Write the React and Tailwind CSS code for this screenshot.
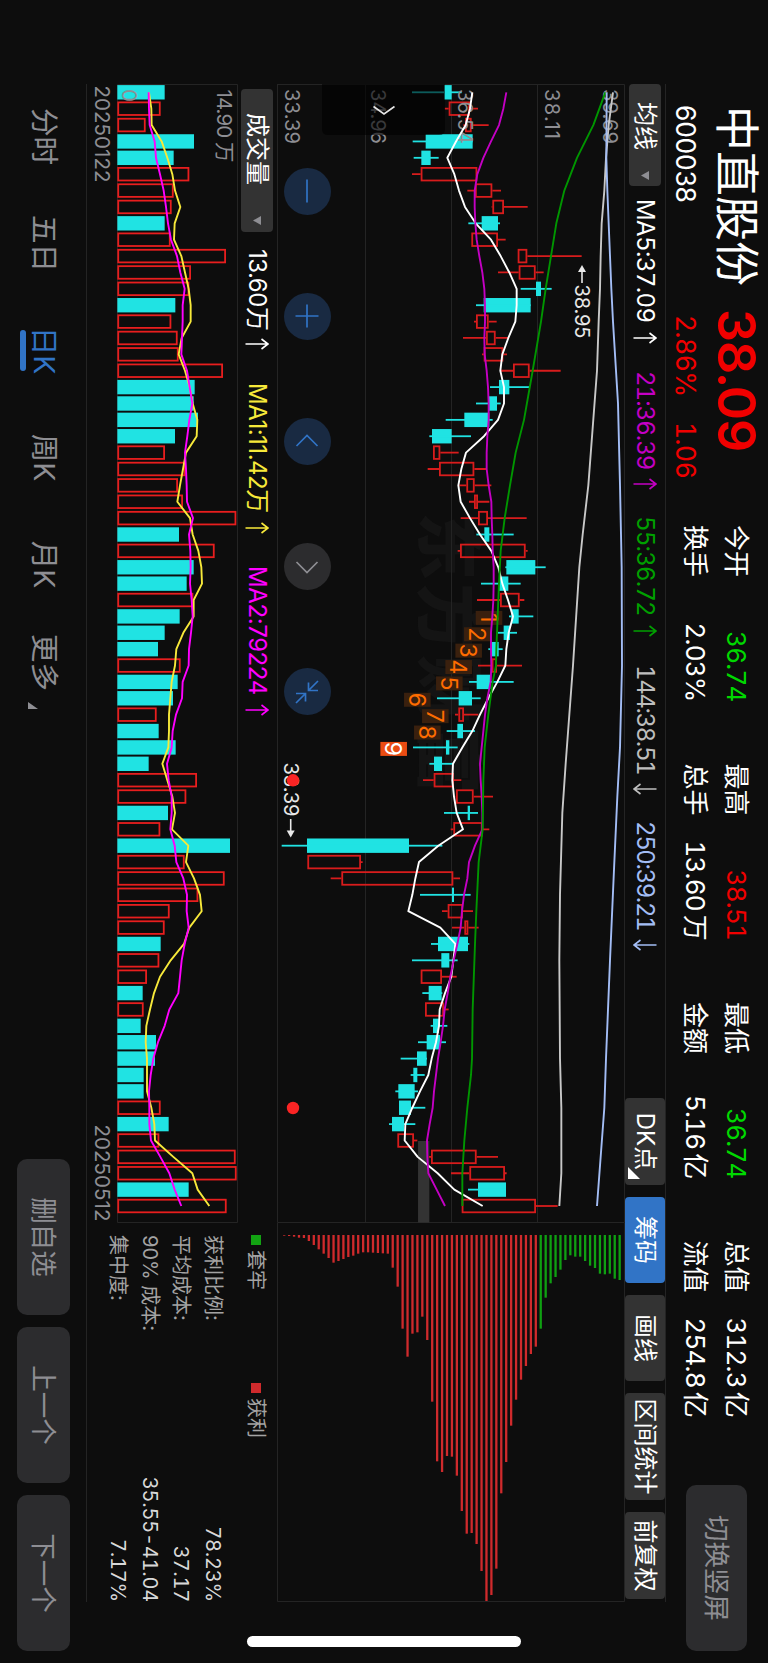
import React from 'react';
import clsx from 'clsx';

const STEP = 16.378;
const FIRST_X = 8.3;

// [up/down, low, body low, body high, high]
const candles = [
  ['d', 426, 522, 545, 575], ['u', 524, 536, 600, 624], ['u', 580, 585, 605, 656], ['d', 428, 467, 608, 608],
  ['d', 431, 454, 482, 506], ['u', 426, 452, 622, 622], ['u', 592, 615, 667, 693], ['u', 665, 667, 702, 773],
  ['d', 595, 635, 684, 690], ['u', 604, 604, 684, 707], ['u', 743, 743, 772, 935], ['u', 684, 746, 797, 821],
  ['d', 752, 798, 813, 845], ['d', 618, 641, 782, 782], ['u', 612, 618, 656, 680], ['u', 579, 648, 677, 717],
  ['u', 636, 641, 700, 711], ['u', 690, 729, 779, 872], ['d', 660, 687, 718, 777], ['d', 618, 656, 681, 692],
  ['d', 527, 583, 658, 668], ['d', 478, 486, 545, 603], ['u', 489, 489, 511, 566], ['u', 473, 507, 613, 650],
  ['u', 568, 589, 614, 664], ['u', 597, 612, 624, 658], ['u', 572, 624, 654, 770], ['d', 619, 643, 658, 731],
  ['u', 563, 570, 767, 773], ['d', 706, 709, 796, 827], ['d', 633, 687, 715, 752], ['u', 621, 690, 749, 763],
  ['d', 717, 724, 746, 790], ['d', 684, 701, 720, 741], ['d', 655, 665, 686, 698], ['u', 624, 665, 681, 756],
  ['d', 597, 620, 661, 731], ['d', 501, 566, 606, 632], ['u', 555, 565, 582, 625], ['d', 530, 562, 579, 615],
  ['d', 429, 528, 538, 563], ['d', 478, 492, 516, 550], ['u', 459, 491, 552, 574], ['u', 557, 558, 611, 669],
  ['d', 522, 593, 600, 624], ['u', 542, 550, 638, 658], ['d', 35, 111, 417, 517], ['u', 112, 112, 273, 278],
  ['u', 182, 214, 550, 570], ['d', 450, 546, 552, 602], ['u', 516, 533, 579, 609], ['u', 546, 583, 595, 626],
  ['d', 483, 504, 594, 598], ['d', 426, 514, 538, 563], ['u', 452, 452, 516, 560], ['d', 457, 476, 515, 517],
  ['u', 465, 465, 522, 536], ['d', 482, 489, 507, 532], ['d', 444, 470, 510, 528], ['d', 392, 441, 470, 471],
  ['d', 422, 430, 442, 464], ['d', 376, 385, 434, 444], ['d', 387, 387, 423, 466], ['d', 357, 366, 402, 436],
  ['u', 382, 382, 432, 442], ['u', 477, 483, 620, 684], ['u', 543, 598, 705, 710], ['d', 594, 624, 708, 708],
  ['u', 575, 575, 798, 863]
];

const volumes = [
  ['d', 254], ['u', 242], ['u', 197], ['d', 342], ['d', 281], ['u', 328], ['u', 281], ['u', 275], ['d', 254], ['u', 272],
  ['u', 438], ['u', 333], ['u', 328], ['d', 286], ['u', 274], ['u', 293], ['u', 296], ['u', 429], ['d', 344], ['d', 341],
  ['d', 354], ['d', 285], ['u', 255], ['u', 316], ['u', 294], ['u', 309], ['u', 469], ['d', 297], ['u', 404], ['d', 341],
  ['d', 320], ['u', 340], ['d', 299], ['d', 254], ['d', 234], ['u', 302], ['d', 293], ['d', 279], ['u', 230], ['d', 236],
  ['d', 287], ['d', 206], ['u', 351], ['u', 319], ['d', 264], ['u', 241], ['d', 450], ['u', 314], ['u', 434], ['u', 355],
  ['u', 269], ['u', 254], ['d', 242], ['u', 238], ['u', 201], ['d', 188], ['u', 191], ['d', 182], ['d', 228], ['d', 225],
  ['d', 191], ['d', 191], ['u', 242], ['d', 266], ['u', 238], ['u', 467], ['u', 470], ['d', 326], ['u', 440]
];

const ma5 = [
  607, 600, 587, 558, 532, 553, 567, 585, 617, 663, 692, 718, 740, 740, 736, 715, 697, 691, 702, 702, 684, 642, 588,
  574, 565, 572, 600, 630, 664, 685, 697, 714, 729, 716, 709, 706, 682, 655, 630, 607, 577, 549, 547, 552, 560, 579,
  505, 447, 436, 427, 415, 511, 556, 550, 544, 525, 509, 507, 498, 485, 475, 450, 427, 406, 404, 443, 503, 553, 638
];
const ma21 = [
  709, 700, 687, 663, 640, 622, 614, 614, 616, 620, 628, 637, 643, 645, 645, 643, 644, 650, 654, 656, 656, 652, 650,
  650, 656, 664, 665, 667, 668, 671, 671, 670, 667, 663, 663, 664, 662, 652, 645, 640, 635, 630, 632, 635, 637, 637,
  615, 597, 592, 582, 576, 572, 562, 551, 541, 533, 524, 519, 512, 504, 498, 492, 488, 479, 471, 472, 475, 500, 525
];
const ma55 = [
  [0, 1006], [2, 970], [4, 921], [6, 883], [8, 859], [10, 843], [12, 827], [14, 813], [17, 788], [20, 762], [22, 737],
  [24, 720], [26, 704], [28, 692], [30, 687], [32, 683], [34, 679], [35, 678], [36, 668], [38, 655], [40, 644],
  [42, 640], [45, 638], [47, 626], [50, 619], [52, 615], [56, 608], [59, 606], [60, 603], [62, 592], [64, 583],
  [66, 577], [68, 577]
];
const ma144 = [
  [0, 1029], [2, 1016], [4, 1008], [6, 1003], [8, 995], [10, 992], [12, 990], [14, 986], [17, 981], [24, 955],
  [27, 938], [29, 928], [35, 909], [41, 887], [44, 877], [49, 870], [53, 868], [59, 870], [62, 874], [66, 874], [68, 868]
];
const ma250 = [
  [0, 1010], [4, 1009], [6, 1012], [10, 1020], [12, 1024], [14, 1029], [17, 1038], [19, 1044], [24, 1050], [27, 1053],
  [29, 1055], [35, 1056], [40, 1050], [43, 1042], [47, 1033], [53, 1020], [59, 1008], [62, 1003], [68, 981]
];
const volMa1 = [
  207, 214, 215, 245, 262, 277, 285, 301, 284, 282, 304, 315, 326, 332, 332, 305, 296, 315, 329, 338, 352, 350, 318,
  309, 300, 292, 330, 338, 355, 364, 366, 341, 341, 310, 289, 285, 275, 271, 267, 267, 265, 247, 262, 277, 285, 276,
  325, 318, 342, 360, 365, 328, 312, 272, 240, 222, 210, 199, 197, 201, 201, 201, 214, 223, 225, 280, 337, 353, 388
];
const volMa2 = [
  206, 207, 209, 224, 228, 240, 251, 258, 264, 273, 291, 301, 314, 308, 308, 306, 304, 321, 329, 337, 328, 322, 315,
  318, 320, 321, 339, 327, 331, 332, 330, 335, 338, 333, 327, 326, 308, 306, 288, 278, 275, 261, 266, 275, 275, 271,
  284, 289, 310, 321, 320, 326, 314, 305, 300, 295, 268, 254, 234, 220, 212, 207, 208, 208, 213, 241, 268, 284, 304
];

// chip distribution, lowest price first
const chips = [
  2, 3, 5, 8, 9, 18, 30, 43, 56, 69, 83, 78, 72, 66, 62, 56, 52, 52, 53, 54, 55, 56, 98, 155, 281, 365, 296, 292, 245,
  315, 500, 679, 711, 663, 665, 722, 828, 896, 894, 927, 1008, 1098, 1080, 1001, 775, 681, 572, 494, 434, 393, 357,
  335, 281, 188, 145, 126, 104, 75, 61, 65, 65, 78, 92, 99, 116, 118, 116, 131, 135
];
const CHIP_SPLIT = 52;

const sequence = [657, 622, 596, 566, 538, 442, 496, 472, 371];

const xAt = (i) => FIRST_X + i * STEP;
const priceY = (v) => 355 - v / 3;
const volY = (v) => 158 - v / 3;
const toPoints = (data, yFn) =>
  data.map((d, i) => (Array.isArray(d) ? `${xAt(d[0])},${yFn(d[1])}` : `${xAt(i)},${yFn(d)}`)).join(' ');

const quotes = [
  [['今开', '36.74', '', 'text-[#00d800]'], ['换手', '2.03%', '', 'text-white']],
  [['最高', '38.51', '', 'text-[#f00000]'], ['总手', '13.60', '万', 'text-white']],
  [['最低', '36.74', '', 'text-[#00d800]'], ['金额', '5.16', '亿', 'text-white']],
  [['总值', '312.3', '亿', 'text-white'], ['流值', '254.8', '亿', 'text-white']]
];

const averages = [
  { text: 'MA5:37.09', up: true, style: 'w-[172px] tracking-[-0.6px] text-white' },
  { text: '21:36.39', up: true, style: 'w-[145px] tracking-[-1px] text-[#c400c4]' },
  { text: '55:36.72', up: true, style: 'w-[149px] tracking-[-0.8px] text-[#00a000]' },
  { text: '144:38.51', up: false, style: 'w-[156px] tracking-[-1.4px] text-[#bdbdbd]' },
  { text: '250:39.21', up: false, style: 'w-[276px] tracking-[-1.4px] text-[#a3bdf5]' }
];

const tools = [
  { text: 'DK点', style: 'w-[87px] bg-[#333333]', corner: true },
  { text: '筹码', style: 'w-[86px] bg-[#3174c6]' },
  { text: '画线', style: 'w-[86px] bg-[#333333]' },
  { text: '区间统计', style: 'w-[107px] bg-[#333333]' },
  { text: '前复权', style: 'w-[87px] bg-[#333333]' }
];

const costs = [
  ['获利比例:', '78.23%'],
  ['平均成本:', '37.17'],
  ['90% 成本:', '35.55-41.04'],
  ['集中度:', '7.17%']
];

const periods = ['分时', '五日', '日K', '周K', '月K', '更多'];

const Arrow = ({ up }) => (
  <svg width="12" height="24" viewBox="0 0 12 24" className={clsx('shrink-0', !up && 'rotate-180')} fill="none" stroke="currentColor" strokeWidth="1.6">
    <path d="M6 23.5V1M1 7.5L6 1l5 6.5" />
  </svg>
);

const Caret = () => (
  <svg width="9" height="8" viewBox="0 0 9 8" className="shrink-0">
    <path d="M0 0h9L4.5 8z" fill="#8e8e93" />
  </svg>
);

const Line = ({ data, y, color }) => (
  <polyline points={toPoints(data, y)} fill="none" stroke={color} strokeWidth="1.9" strokeLinejoin="round" />
);

const Candle = ({ data, index }) => {
  const [dir, low, open, close, high] = data;
  const x = xAt(index);
  const top = priceY(close);
  const height = (close - open) / 3;
  if (dir === 'd') {
    return (
      <g fill="#20e3e3">
        <rect x={x - 7.2} y={top} width="14.4" height={height} />
        <rect x={x - 0.9} y={priceY(high)} width="1.8" height={(high - low) / 3} />
      </g>
    );
  }
  return (
    <g fill="none" stroke="#d81c1c" strokeWidth="1.8">
      <rect x={x - 6.3} y={top + 0.9} width="12.6" height={Math.max(height - 1.8, 1)} />
      <path d={`M${x} ${priceY(high)}V${top}M${x} ${priceY(open)}V${priceY(low)}`} />
    </g>
  );
};

const PriceChart = () => (
  <svg width="1139" height="348" viewBox="0 0 1139 348" className="block shrink-0 font-['Inter']">
    <text x="428" y="201" fontSize="68" fontWeight="900" fill="#141414" textLength="282" className="font-['Noto_Sans_CJK_SC',sans-serif]">东方财富</text>
    <path d="M.5 348V.5H1138.5V347.5H.5M.5 87.5H1138M.5 173.5H1138M.5 259.5H1138" fill="none" stroke="#242424" />
    <rect x="1057" y={priceY(478)} width="81.5" height="11.3" fill="#333333" />
    {candles.map((c, i) => (
      <Candle key={i} data={c} index={i} />
    ))}
    <g fontSize="20" fill="#8e8e93">
      <text x="5" y={priceY(1020) + 7.2} textLength="55">39.69</text>
      <text x="5" y={priceY(846) + 7.2} textLength="50">38.11</text>
      <text x="5" y={priceY(586) + 7.2} textLength="55">36.54</text>
      <text x="5" y={priceY(326) + 7.2} textLength="55">34.96</text>
      <text x="5" y={priceY(67) + 7.2} textLength="55">33.39</text>
    </g>
    <path d="M0 180h45q6 0 6 6v111q0 6-6 6H0z" fill="#000" opacity="0.6" />
    <path d="M22.5 230.5l7.5 10.5l-7.5 10.5" fill="none" stroke="#e5e5e5" strokeWidth="1.6" />
    {sequence.map((v, i) => (
      <g key={v}>
        <rect x={xAt(32 + i) - 5.5} y={priceY(v) - 13.3} width="14" height="26.6" fill={i === 8 ? '#ea4c12' : '#3a200e'} />
        <text x={xAt(32 + i) + 1.5} y={priceY(v) + 8.2} fontSize="23" textAnchor="middle" fill={i === 8 ? '#fff' : '#ff6c00'}>
          {i + 1}
        </text>
      </g>
    ))}
    <Line data={ma5} y={priceY} color="#ffffff" />
    <Line data={ma21} y={priceY} color="#c400c4" />
    <Line data={ma55} y={priceY} color="#009600" />
    <Line data={ma144} y={priceY} color="#c8c8c8" />
    <Line data={ma250} y={priceY} color="#a3bdf5" />
    <g fontSize="20" fill="#e8e8e8">
      <path d="M187 43H199" stroke="#e8e8e8" strokeWidth="1.6" />
      <path d="M181 43l7-4v8z" />
      <text x="200.5" y="50.2" textLength="54">38.95</text>
      <text x="678.5" y="341.5" textLength="54">33.39</text>
      <path d="M735 334.3H748" stroke="#e8e8e8" strokeWidth="1.6" />
      <path d="M753.5 334.3l-7-4v8z" />
    </g>
    <circle cx="696.3" cy="332" r="6.2" fill="#fa2424" />
    <circle cx="1024" cy="332" r="6.2" fill="#fa2424" />
  </svg>
);

const ChipChart = () => (
  <svg width="379" height="348" viewBox="0 0 379 348" className="block shrink-0">
    <path d="M0 .5H378.5V347.5H0" fill="none" stroke="#242424" />
    {chips.map((len, i) => (
      <rect
        key={i}
        x="12"
        y={priceY(42.3 + i * 14.8) - 1.25}
        width={len / 3}
        height="2.3"
        fill={i < CHIP_SPLIT ? '#cf2a2c' : '#0fa012'}
      />
    ))}
  </svg>
);

const VolumeChart = () => (
  <svg width="1139" height="152" viewBox="0 0 1139 152" className="block shrink-0 font-['Inter','Noto_Sans_CJK_SC',sans-serif]">
    <path d="M.5 .5H1138.5V120.5H.5zM0 151.5H1139" fill="none" stroke="#242424" />
    {volumes.map(([dir, v], i) =>
      dir === 'd' ? (
        <rect key={i} x={xAt(i) - 7.2} y={volY(v)} width="14.4" height={(v - 112) / 3} fill="#20e3e3" />
      ) : (
        <rect key={i} x={xAt(i) - 6.3} y={volY(v) + 0.9} width="12.6" height={(v - 112) / 3 - 1.8} fill="none" stroke="#e81e1e" strokeWidth="1.8" />
      )
    )}
    <g fontSize="20.5" fill="#8e8e93">
      <text x="5.5" y={volY(433) + 7.4} textLength="73">14.90 万</text>
      <text x="5" y={volY(148) + 7.4}>0</text>
      <text x="1.5" y={volY(68) + 7.4} textLength="97">20250122</text>
      <text x="1040.5" y={volY(68) + 7.4} textLength="97">20250512</text>
    </g>
    <Line data={volMa1} y={volY} color="#f7e93a" />
    <Line data={volMa2} y={volY} color="#ff00ff" />
  </svg>
);

const RoundButton = ({ muted, children }) => (
  <button
    className={clsx(
      'size-[47px] rounded-full flex items-center justify-center',
      muted ? 'bg-[#2c2c2e] text-[#8e8e93]' : 'bg-[#192a42] text-[#3174c6]'
    )}
  >
    <svg width="28" height="28" viewBox="-14 -14 28 28" fill="none" stroke="currentColor" strokeWidth="1.7">
      {children}
    </svg>
  </button>
);

const Header = () => (
  <div className="h-[102px] flex pl-[106px] text-white">
    <div className="w-[203px] shrink-0">
      <div className="h-[63px] flex items-center text-[45px] leading-none whitespace-nowrap">中直股份</div>
      <div className="h-[39px] -ml-px flex items-center text-[26.5px] leading-none tracking-[-0.3px]">600038</div>
    </div>
    <div className="w-[216px] shrink-0 text-[#f00000]">
      <div className="h-[63px] flex items-center text-[52px] leading-none font-semibold tracking-[-1.2px]">38.09</div>
      <div className="h-[39px] flex items-center pl-[6px] text-[26.5px] leading-none tracking-[-0.6px] tabular-nums">
        <span className="w-[107px]">2.86%</span>
        <span>1.06</span>
      </div>
    </div>
    <div className="flex gap-[62px] pt-[11px]">
      {quotes.map((column, i) => (
        <div key={i} className="w-[176.5px] text-[26px] leading-none">
          {column.map(([label, value, unit, color]) => (
            <div key={label} className="h-[41px] flex items-center justify-between whitespace-nowrap">
              <span>{label}</span>
              <span className={clsx('flex gap-[4px] tracking-[-0.8px] tabular-nums', color)}>
                {value}
                {unit && <span>{unit}</span>}
              </span>
            </div>
          ))}
        </div>
      ))}
    </div>
    <button className="ml-[68px] mt-[21px] w-[166px] h-[61px] shrink-0 rounded-[10px] bg-[#2c2c2e] text-[26.5px] text-[#8e8e93]">
      切换竖屏
    </button>
  </div>
);

const App = () => {
  return (
    <div className="w-[768px] h-[1663px] overflow-hidden bg-[#0d0d0d]">
      {/* Landscape screen, turned clockwise */}
      <div className="relative w-[1663px] h-[768px] origin-top-left translate-x-[768px] rotate-90 bg-[#0d0d0d] font-['Inter','Noto_Sans_CJK_SC',sans-serif]">
        <Header />

        {/* Moving averages */}
        <div className="ml-[84px] w-[1518px] h-[41px] flex items-center border-t border-[#242424] text-[24px] leading-none whitespace-nowrap">
          <button className="w-[102px] h-[32px] shrink-0 rounded-[4px] bg-[#333333] flex items-center pl-[18px] gap-[21px] text-white">
            均线
            <Caret />
          </button>
          <div className="flex pl-[13px]">
            {averages.map((item) => (
              <div key={item.text} className={clsx('flex items-center gap-[9px] tabular-nums', item.style)}>
                {item.text}
                <Arrow up={item.up} />
              </div>
            ))}
          </div>
          <div className="flex gap-[12px] ml-auto mr-[3px]">
            {tools.map((tool) => (
              <button
                key={tool.text}
                className={clsx('relative h-[40px] rounded-[4px] text-white flex items-center justify-center', tool.style)}
              >
                {tool.text}
                {tool.corner && (
                  <svg width="12" height="12" viewBox="0 0 12 12" className="absolute right-[6px] bottom-[3px]">
                    <path d="M12 0v12H0z" fill="#fff" />
                  </svg>
                )}
              </button>
            ))}
          </div>
        </div>

        {/* Candles and chip distribution */}
        <div className="relative ml-[84px] h-[348px] flex">
          <PriceChart />
          <ChipChart />
          <div className="absolute left-[83.5px] top-[294px] flex gap-[78.2px]">
            <RoundButton><path d="M-11.5 0h23" /></RoundButton>
            <RoundButton><path d="M-11.5 0h23M0-11.5v23" /></RoundButton>
            <RoundButton><path d="M5-10.5L-5.500 0L5 10.5" /></RoundButton>
            <RoundButton muted><path d="M-5-10.5L5.5 0L-5 10.5" /></RoundButton>
            <RoundButton>
              <path d="M-11-11L-1.5-1.5M-9.5-1.5h8v-9.5M11 11L1.5 1.5M9.5 1.5h-8v9.5" />
            </RoundButton>
          </div>
        </div>

        {/* Volume header and chip legend */}
        <div className="ml-[84px] h-[39px] flex items-center text-[24px] leading-none whitespace-nowrap">
          <button className="ml-[5px] w-[143px] h-[32px] shrink-0 rounded-[4px] bg-[#333333] flex items-center pl-[24px] gap-[31px] text-white">
            成交量
            <Caret />
          </button>
          <div className="ml-[17px] w-[134px] flex items-center gap-[8px] tracking-[-0.5px] text-white">13.60万 <Arrow up /></div>
          <div className="w-[183px] flex items-center gap-[9px] tracking-[-0.5px] text-[#f7e93a]">MA1:11.42万 <Arrow up /></div>
          <div className="w-[669px] flex items-center gap-[9px] tracking-[-0.4px] text-[#ff00ff]">MA2:79224 <Arrow up /></div>
          <div className="flex items-center pt-[3px] text-[20px] text-[#a3a3a3]">
            <div className="w-[148px] flex items-center gap-[5px]">
              <span className="size-[10px] bg-[#12a312]" />
              套牢
            </div>
            <div className="flex items-center gap-[5px]">
              <span className="size-[10px] bg-[#cf2a2c]" />
              获利
            </div>
          </div>
        </div>

        {/* Volume */}
        <div className="ml-[84px] h-[152px] flex">
          <VolumeChart />
          <div className="w-[379px] pt-[9px] pl-[12px] border-b border-[#242424] text-[20px] leading-none">
            {costs.map(([label, value]) => (
              <div key={label} className="h-[31.7px] flex items-center justify-between">
                <span className="text-[#a3a3a3]">{label}</span>
                <span className="text-[#d8d8d8] tracking-[-0.2px] tabular-nums">{value}</span>
              </div>
            ))}
          </div>
        </div>

        {/* Period tabs */}
        <div className="h-[85px] flex items-center pl-[83px]">
          {periods.map((period) => (
            <div
              key={period}
              className={clsx(
                'relative w-[107px] flex items-center justify-center text-[28.5px] leading-none whitespace-nowrap',
                period === '日K' ? 'text-[#3174c6]' : 'text-[#8e8e93]'
              )}
            >
              {period}
              {period === '日K' && <span className="absolute -bottom-[9px] w-[41px] h-[6px] rounded-full bg-[#3174c6]" />}
              {period === '更多' && (
                <svg width="7" height="10" viewBox="0 0 7 10" className="ml-[11px] mt-[20px]">
                  <path d="M7 0v10H0z" fill="#8e8e93" />
                </svg>
              )}
            </div>
          ))}
          <div className="ml-[434px] flex gap-[12px] text-[26.5px] text-[#8e8e93]">
            <button className="w-[156px] h-[53px] rounded-[10px] bg-[#2c2c2e]">删自选</button>
            <button className="w-[156px] h-[53px] rounded-[10px] bg-[#2c2c2e]">上一个</button>
            <button className="w-[156px] h-[53px] rounded-[10px] bg-[#2c2c2e]">下一个</button>
          </div>
        </div>

        {/* Home indicator */}
        <div className="absolute left-[1636px] top-[247px] w-[11px] h-[274px] rounded-full bg-white" />
      </div>
    </div>
  );
};

export default App;
